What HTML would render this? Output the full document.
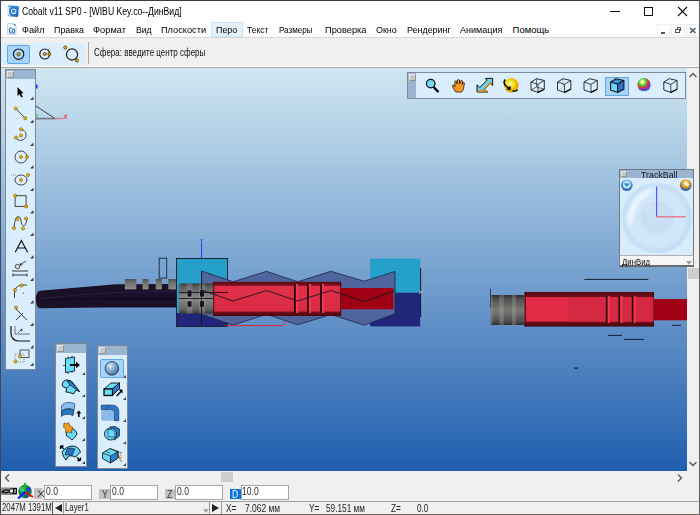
<!DOCTYPE html>
<html><head><meta charset="utf-8">
<style>
*{margin:0;padding:0;box-sizing:border-box}
html,body{width:700px;height:515px;overflow:hidden;background:#fff;font-family:"Liberation Sans",sans-serif;color:#000}
.a{position:absolute}
.t{position:absolute;white-space:nowrap;line-height:1}
#title{left:0;top:0;width:700px;height:22px;background:#fff}
#menu{left:0;top:22px;width:700px;height:15px;background:#fff}
.mi{position:absolute;top:26px;font-size:9px;white-space:nowrap;line-height:1;color:#000}
#tb{left:0;top:37px;width:700px;height:31px;background:#f0f0f0;border-top:1px solid #d8d8d8;border-bottom:1px solid #a8a8a8}
#vp{left:0;top:68px;width:687px;height:403px;background:linear-gradient(#d0e7f2,#205eae);overflow:hidden}
#vsb{left:687px;top:68px;width:13px;height:403px;background:#f0f0f0}
#hsb{left:0;top:471px;width:700px;height:14px;background:#f0f0f0}
#coord{left:0;top:485px;width:700px;height:16px;background:#f0f0f0}
#status{left:0;top:501px;width:700px;height:14px;background:#f0f0f0;border-top:1px solid #a0a0a0;border-bottom:1px solid #6b6458}
.inp{position:absolute;top:485px;height:15px;background:#fff;border:1px solid #a9a9a9;border-right-color:#d0d0d0;border-bottom-color:#e0e0e0;font-size:9px;line-height:12px;padding-left:1px;color:#222}
.lbl{position:absolute;top:489px;height:11px;background:#c0c0c0;font-size:11px;line-height:11px;text-align:center;color:#333}
.panel{position:absolute;background:#dbeefd;border:1px solid #7f8a96}
.phead{position:absolute;left:0;top:0;right:0;height:9px;background:#9ab4d2}
.pbtn{position:absolute;left:1px;top:1px;width:7px;height:7px;background:#c8c8c8;border:1px solid #e8e8e8;border-right-color:#909090;border-bottom-color:#909090}
.tri{position:absolute;width:0;height:0;border-left:4px solid transparent;border-bottom:4px solid #404040}
</style></head><body>
<!-- title bar -->
<div id="title" class="a"></div>
<svg class="a" style="left:0;top:0" width="22" height="22" viewBox="0 0 22 22">
<defs><linearGradient id="ticn" x1="0" y1="0" x2="1" y2="1"><stop offset="0" stop-color="#4aa8e8"/><stop offset="1" stop-color="#1560b8"/></linearGradient></defs>
<path d="M9 5.2 L18 6 Q19 6.2 18.8 7.5 L18.3 15.8 Q18.2 17 17 16.9 L9 16.2 Q7.8 16 7.8 14.8 L8 6.3 Q8.1 5.1 9 5.2 Z" fill="url(#ticn)"/>
<path d="M10.5 5.5 Q6 7.5 6.8 12 Q7.5 15.5 11 16.5 Q8.8 14 9 11 Q9.2 7.5 10.5 5.5 Z" fill="#e4e8ec"/>
<circle cx="13.3" cy="11.2" r="3.6" fill="#1a68c0"/>
<circle cx="13.6" cy="11.3" r="2.3" fill="none" stroke="#d8ecfa" stroke-width="1.1"/>
<circle cx="13.7" cy="11.4" r="0.9" fill="#5ab0f0"/>
</svg>
<div class="t" style="left:22.2px;top:7px;font-size:10px;color:#000;transform:scaleX(0.865);transform-origin:0 0;">Cobalt v11 SP0 - [WIBU Key.co--ДинВид]</div>
<!-- window buttons -->
<div class="a" style="left:610px;top:11px;width:10px;height:1px;background:#111"></div>
<div class="a" style="left:644px;top:7px;width:9px;height:9px;border:1px solid #111"></div>
<svg class="a" style="left:677px;top:6px" width="11" height="11" viewBox="0 0 11 11"><path d="M1 1L10 10M10 1L1 10" stroke="#111" stroke-width="1.1"/></svg>
<!-- menu -->
<div id="menu" class="a"></div>
<svg class="a" style="left:0;top:21px" width="20" height="16" viewBox="0 21 20 16">
<path d="M7.6 23.6 H13.5 L16 26 V34.5 H7.6 Z" fill="#f6fafd" stroke="#a8cce8" stroke-width="0.8"/>
<path d="M13.3 23.6 Q13.5 25.8 16 26.2 Q15.8 24 13.3 23.6 Z" fill="#2a6ab0"/>
<path d="M11.6 28 Q9.5 27.3 9.4 30.5 Q9.4 33.6 11.6 33" fill="none" stroke="#2a6ab0" stroke-width="1.2"/>
<ellipse cx="13.5" cy="31" rx="1.3" ry="2.2" fill="none" stroke="#2a6ab0" stroke-width="1.1"/>
</svg>
<div class="a" style="left:211px;top:22px;width:32px;height:15px;background:#e5f1fb;border:1px solid #cce4f7"></div>
<div class="t" style="left:21.9px;top:25px;font-size:9.5px;color:#000;transform:scaleX(0.964);transform-origin:0 0;">Файл</div>
<div class="t" style="left:54.0px;top:25px;font-size:9.5px;color:#000;transform:scaleX(0.935);transform-origin:0 0;">Правка</div>
<div class="t" style="left:93.4px;top:25px;font-size:9.5px;color:#000;transform:scaleX(0.978);transform-origin:0 0;">Формат</div>
<div class="t" style="left:135.8px;top:25px;font-size:9.5px;color:#000;transform:scaleX(0.912);transform-origin:0 0;">Вид</div>
<div class="t" style="left:160.9px;top:25px;font-size:9.5px;color:#000;transform:scaleX(0.969);transform-origin:0 0;">Плоскости</div>
<div class="t" style="left:215.7px;top:25px;font-size:9.5px;color:#000;transform:scaleX(0.936);transform-origin:0 0;">Перо</div>
<div class="t" style="left:247.1px;top:25px;font-size:9.5px;color:#000;transform:scaleX(0.891);transform-origin:0 0;">Текст</div>
<div class="t" style="left:278.8px;top:25px;font-size:9.5px;color:#000;transform:scaleX(0.845);transform-origin:0 0;">Размеры</div>
<div class="t" style="left:325.0px;top:25px;font-size:9.5px;color:#000;transform:scaleX(0.976);transform-origin:0 0;">Проверка</div>
<div class="t" style="left:375.9px;top:25px;font-size:9.5px;color:#000;transform:scaleX(0.941);transform-origin:0 0;">Окно</div>
<div class="t" style="left:407.3px;top:25px;font-size:9.5px;color:#000;transform:scaleX(0.938);transform-origin:0 0;">Рендеринг</div>
<div class="t" style="left:460.0px;top:25px;font-size:9.5px;color:#000;transform:scaleX(0.952);transform-origin:0 0;">Анимация</div>
<div class="t" style="left:512.6px;top:25px;font-size:9.5px;color:#000;transform:scaleX(1.0);transform-origin:0 0;">Помощь</div>
<!-- MDI buttons -->
<div class="a" style="left:657px;top:24px;width:13px;height:12px;background:#fff;border:1px solid #efefef"></div>
<div class="a" style="left:660.7px;top:32px;width:4.7px;height:1.6px;background:#4a5868"></div>
<div class="a" style="left:671px;top:24px;width:14px;height:12px;background:#fff;border:1px solid #efefef"></div>
<div class="a" style="left:676.5px;top:27.2px;width:4.5px;height:3.5px;border:1px solid #4a5868;border-top-width:1.5px"></div>
<div class="a" style="left:675px;top:29px;width:4.5px;height:3.8px;border:1px solid #4a5868;border-top-width:1.5px;background:#fff"></div>
<div class="a" style="left:686px;top:24px;width:13px;height:12px;background:#fff;border:1px solid #efefef"></div>
<svg class="a" style="left:688.5px;top:27px" width="7.5" height="7" viewBox="0 0 7.5 7"><path d="M1 1L6.5 6M6.5 1L1 6" stroke="#4a5868" stroke-width="1.5"/></svg>
<!-- toolbar -->
<div id="tb" class="a"></div>
<div class="a" style="left:1px;top:43px;width:84px;height:22px;background:#dbeefd"></div>
<div class="a" style="left:0;top:66px;width:700px;height:1px;background:#fbfbfb"></div>
<div class="a" style="left:7px;top:45px;width:23px;height:19px;background:#a6d4fa;border:1px solid #5fa8ec;border-radius:2px"></div>
<svg class="a" style="left:0;top:38px" width="90" height="30" viewBox="0 38 90 30">
<g fill="none" stroke="#1a1a1a" stroke-width="1.15">
<circle cx="18.6" cy="54.2" r="5.2"/>
<circle cx="44.8" cy="54" r="5"/>
<circle cx="72" cy="54.5" r="5.6"/>
</g>
<g fill="#f2b400" stroke="#3a2800" stroke-width="0.7">
<circle cx="18.6" cy="54.2" r="1.6"/>
<circle cx="44.8" cy="54" r="1.5"/>
<circle cx="49.3" cy="54" r="1.5"/>
<circle cx="65.3" cy="47.5" r="1.6"/>
<circle cx="76.9" cy="60.5" r="1.6"/>
</g>
</svg>
<div class="a" style="left:88px;top:42px;width:1px;height:22px;background:#a8a8a8"></div>
<div class="t" style="left:94.4px;top:47px;font-size:10.5px;color:#111;transform:scaleX(0.763);transform-origin:0 0;">Сфера: введите центр сферы</div>
<!-- viewport -->
<div id="vp" class="a"></div>
<!-- viewport content -->
<svg class="a" style="left:0;top:68px" width="687" height="403" viewBox="0 68 687 403">
<defs>
<linearGradient id="gcyl" x1="0" y1="0" x2="0" y2="1">
<stop offset="0" stop-color="#383838"/><stop offset="0.12" stop-color="#5e5e5c"/><stop offset="0.5" stop-color="#8a8987"/><stop offset="0.85" stop-color="#626260"/><stop offset="1" stop-color="#383838"/>
</linearGradient>
<linearGradient id="gcyl2" x1="0" y1="0" x2="0" y2="1">
<stop offset="0" stop-color="#2e2e2e"/><stop offset="0.15" stop-color="#505050"/><stop offset="0.5" stop-color="#7a7976"/><stop offset="0.85" stop-color="#525250"/><stop offset="1" stop-color="#2e2e2e"/>
</linearGradient>
<linearGradient id="gtooth" x1="0" y1="0" x2="0" y2="1">
<stop offset="0" stop-color="#3e3e3e"/><stop offset="0.12" stop-color="#5e5c5a"/><stop offset="0.3" stop-color="#6e6c6a"/><stop offset="1" stop-color="#8e8c88"/>
</linearGradient>
<linearGradient id="gred" x1="0" y1="0" x2="0" y2="1">
<stop offset="0" stop-color="#5a0a14"/><stop offset="0.1" stop-color="#7a1020"/><stop offset="0.14" stop-color="#e2304a"/><stop offset="0.85" stop-color="#d82a44"/><stop offset="0.9" stop-color="#6a0c18"/><stop offset="1" stop-color="#4a0810"/>
</linearGradient>
<linearGradient id="gred2" x1="0" y1="0" x2="0" y2="1">
<stop offset="0" stop-color="#5a0a14"/><stop offset="0.14" stop-color="#6e0e1c"/><stop offset="0.16" stop-color="#e42c46"/><stop offset="0.84" stop-color="#e02a44"/><stop offset="0.88" stop-color="#6a0c18"/><stop offset="1" stop-color="#400810"/>
</linearGradient>
</defs>
<!-- axis triangle -->
<rect x="36" y="84.5" width="1.5" height="4" fill="#2020ff"/>
<path d="M36 106 L55 118.5" stroke="#283038" stroke-width="0.9"/>
<rect x="36" y="117.8" width="19.5" height="1.6" fill="#6c7882"/>
<rect x="55.5" y="117.8" width="8" height="1.4" fill="#e07888"/>
<path d="M64 114.5 L67 118.8 M67 114.5 L64 118.8" stroke="#f02020" stroke-width="0.9"/>
<path d="M36.5 114.5 H38 L36.5 117 H38" stroke="#20d020" stroke-width="0.8" fill="none"/>
<!-- cable -->
<path d="M40 290.8 Q36 291.5 36 299 Q36 308 40 308.3 L100 307.6 L178 307.5 L178 284 L116 284.3 Z" fill="#1a1028"/>
<path d="M41 299 Q60 296 116 292.5 L178 291.5" stroke="#2a2040" stroke-width="1.2" fill="none"/>
<path d="M41 300 Q70 299 116 298.5 L178 298.5" stroke="#0c0814" stroke-width="0.8" fill="none"/>
<path d="M100 299 H178" stroke="#0e0a18" stroke-width="0.8"/>
<!-- teeth -->
<rect x="124.8" y="279.2" width="11.6" height="10.2" fill="url(#gtooth)"/>
<rect x="142.5" y="279.2" width="6.1" height="10.2" fill="url(#gtooth)"/>
<rect x="155.7" y="279.2" width="6.2" height="10.2" fill="url(#gtooth)"/>
<rect x="168.3" y="279.2" width="8.5" height="10.2" fill="url(#gtooth)"/>
<rect x="159.2" y="258.2" width="7.5" height="19.9" fill="none" stroke="#1c2430" stroke-width="0.9"/>
<!-- left cyan box -->
<rect x="176.8" y="258" width="50.8" height="54.9" fill="#24a0ca"/>
<rect x="176.8" y="312.9" width="50.8" height="13.5" fill="#20267a"/>
<rect x="176.5" y="258.5" width="51" height="68" fill="none" stroke="#141c28" stroke-width="0.9"/>
<path d="M201.6 244 V258" stroke="#1a3cff" stroke-width="1"/>
<path d="M200.5 239 l1 2 l1 -2 M201.5 241 v3" stroke="#1a3cff" stroke-width="0.7" fill="none"/>
<!-- right cyan box -->
<rect x="370.1" y="258.5" width="50.1" height="34.2" fill="#24a0ca"/>
<rect x="370.1" y="292.7" width="50.1" height="33.7" fill="#20267a"/>
<path d="M420.6 268 V317" stroke="#101820" stroke-width="1"/>
<path d="M418.8 289.8 l4.6 4.4 M423.4 289.8 l-4.6 4.4" stroke="#b8b0a0" stroke-width="0.9"/>
<!-- slate zigzag shape -->
<path d="M201.6 271 L233 281.8 L266.6 271.3 L297.6 281.8 L330.8 271.3 L364.3 281.2 L395 271.5 L395 313.8 L364.3 325.2 L330.8 314.5 L297.6 324.8 L266.6 314.3 L233 325 L201.6 314.4 Z" fill="#4f659e" stroke="#1e2440" stroke-width="0.8"/>
<!-- red rod -->
<rect x="341" y="288" width="52.4" height="21.3" fill="#a00014"/>
<!-- gray connector -->
<path d="M181 283.4 H213.5 V313.7 H181 Q179 313.7 179 311 V286 Q179 283.4 181 283.4 Z" fill="url(#gcyl)"/>
<rect x="186.5" y="283.6" width="6" height="30" fill="#b8b6b2" fill-opacity="0.28"/>
<rect x="199" y="283.6" width="6" height="30" fill="#b8b6b2" fill-opacity="0.28"/>
<rect x="187.6" y="290.4" width="3.9" height="6.2" fill="#1a1028"/>
<rect x="200" y="290.4" width="4" height="6.2" fill="#1a1028"/>
<rect x="187.6" y="301.2" width="3.9" height="5.5" fill="#1a1028"/>
<rect x="200" y="301.2" width="4" height="5.5" fill="#1a1028"/>
<path d="M179 298.5 H213" stroke="#141018" stroke-width="0.9"/>
<!-- red body left -->
<rect x="213.3" y="281.8" width="127.8" height="34.2" fill="url(#gred)"/>
<path d="M213.8 281.8 V316 M340.6 281.8 V316" stroke="#4a0a14" stroke-width="1"/>
<g>
<rect x="294.0" y="284" width="1.9" height="29" fill="#2a0610"/><rect x="295.9" y="284" width="2.2" height="29" fill="#f0384f"/>
<rect x="307.0" y="284" width="1.9" height="29" fill="#2a0610"/><rect x="308.9" y="284" width="2.2" height="29" fill="#f0384f"/>
<rect x="320.1" y="284" width="1.9" height="29" fill="#2a0610"/><rect x="322.0" y="284" width="2.2" height="29" fill="#f0384f"/>
</g>
<path d="M179 292.5 H228" stroke="#141018" stroke-width="0.9"/>
<path d="M201.5 271 V326" stroke="#141828" stroke-width="0.9"/>
<path d="M201.6 290 L233 301 L266.6 290.5 L297.6 301 L330.8 290.5 L364.3 301.5 L395 290.8" fill="none" stroke="#1a1420" stroke-width="0.9"/>
<path d="M226.5 325.6 H282.7" stroke="#e02030" stroke-width="1"/>
<path d="M283 322 l3 3.5 M286 322 l-3 3.5" stroke="#e02030" stroke-width="0.6"/>
<!-- right assembly -->
<path d="M490.5 288.6 V308" stroke="#2a3a60" stroke-width="1"/>
<rect x="490.7" y="295" width="34" height="30" rx="1.5" fill="url(#gcyl2)"/>
<rect x="491" y="296" width="1.6" height="28" fill="#a8a6a2" fill-opacity="0.35"/>
<rect x="499.2" y="295" width="4.6" height="30" fill="#b0aeab" fill-opacity="0.3"/>
<rect x="511.8" y="295" width="4.2" height="30" fill="#b0aeab" fill-opacity="0.3"/>
<rect x="524.6" y="292" width="129.3" height="34.6" fill="url(#gred2)"/>
<path d="M525.2 292 V326.6 M653.4 292 V326.6" stroke="#3a0810" stroke-width="1.1"/>
<rect x="568" y="297.5" width="86" height="24.5" fill="#cc2640" fill-opacity="0.55"/>
<g>
<rect x="605.8" y="296" width="1.9" height="27" fill="#2a0610"/><rect x="607.7" y="296" width="2.2" height="27" fill="#f0384f"/>
<rect x="618.4" y="296" width="1.9" height="27" fill="#2a0610"/><rect x="620.3000000000001" y="296" width="2.2" height="27" fill="#f0384f"/>
<rect x="631.8" y="296" width="1.9" height="27" fill="#2a0610"/><rect x="633.7" y="296" width="2.2" height="27" fill="#f0384f"/>
</g>
<rect x="654" y="299" width="33" height="21.3" fill="#a00014"/>
<path d="M584.4 279.4 H648.4" stroke="#1a2030" stroke-width="1"/>
<path d="M672 325.4 H681 M608 335.4 H622 M624 339.4 H644" stroke="#1a2030" stroke-width="1"/>
<rect x="574" y="367.3" width="4" height="1.8" fill="#2a3a58"/>
</svg>
<!-- left toolbar panel -->
<div class="panel" style="left:5px;top:69px;width:31px;height:301px"><div class="phead"></div><div class="pbtn"></div></div>
<svg class="a" style="left:0;top:68px" width="60" height="302" viewBox="0 68 60 302">
<g fill="#404040">
<path d="M30 100 h3.5 v-3.5 z"/><path d="M30 123 h3.5 v-3.5 z"/><path d="M30 146 h3.5 v-3.5 z"/><path d="M30 168.5 h3.5 v-3.5 z"/><path d="M30 191 h3.5 v-3.5 z"/><path d="M30 213.5 h3.5 v-3.5 z"/><path d="M30 236 h3.5 v-3.5 z"/><path d="M30 258.5 h3.5 v-3.5 z"/><path d="M30 281 h3.5 v-3.5 z"/><path d="M30 303.5 h3.5 v-3.5 z"/><path d="M30 326 h3.5 v-3.5 z"/><path d="M30 348.5 h3.5 v-3.5 z"/><path d="M30 366 h3.5 v-3.5 z"/>
</g>
<!-- arrow -->
<path d="M17.5 87 L17.5 96 L19.5 94.2 L21.3 97.5 L22.8 96.8 L21 93.5 L23.5 93.2 Z" fill="#000"/>
<!-- line -->
<path d="M15.8 108.6 L25.2 118.2" stroke="#333" stroke-width="0.9"/>
<circle cx="15.8" cy="108.6" r="1.6" fill="#f0b000" stroke="#6a4a00" stroke-width="0.5"/><circle cx="25.2" cy="118.2" r="1.6" fill="#f0b000" stroke="#6a4a00" stroke-width="0.5"/>
<!-- arc -->
<path d="M21.5 129.5 A5.5 5.5 0 1 1 16 138" fill="none" stroke="#333" stroke-width="0.9"/>
<circle cx="21" cy="129.3" r="1.6" fill="#f0b000" stroke="#6a4a00" stroke-width="0.5"/><circle cx="21" cy="135.5" r="1.6" fill="#f0b000" stroke="#6a4a00" stroke-width="0.5"/><circle cx="16" cy="137.5" r="1.6" fill="#f0b000" stroke="#6a4a00" stroke-width="0.5"/>
<!-- circle -->
<circle cx="21" cy="157" r="6" fill="none" stroke="#333" stroke-width="0.9"/>
<circle cx="21" cy="157" r="1.6" fill="#f0b000" stroke="#6a4a00" stroke-width="0.5"/><circle cx="27" cy="157" r="1.6" fill="#f0b000" stroke="#6a4a00" stroke-width="0.5"/>
<!-- ellipse tangent -->
<ellipse cx="21" cy="180" rx="6" ry="5" fill="none" stroke="#333" stroke-width="0.9"/>
<path d="M11 175 H17" stroke="#555" stroke-width="0.6" stroke-dasharray="1 1"/>
<circle cx="21" cy="180" r="1.6" fill="#f0b000" stroke="#6a4a00" stroke-width="0.5"/><circle cx="28" cy="175" r="1.6" fill="#f0b000" stroke="#6a4a00" stroke-width="0.5"/>
<!-- rect -->
<rect x="15.1" y="195.7" width="11" height="10.7" fill="none" stroke="#333" stroke-width="0.9"/>
<circle cx="15.1" cy="195.7" r="1.6" fill="#f0b000" stroke="#6a4a00" stroke-width="0.5"/><circle cx="26.2" cy="206.4" r="1.6" fill="#f0b000" stroke="#6a4a00" stroke-width="0.5"/>
<!-- spline -->
<path d="M14 228 C15 214 20 214 21 221 S26 228 27 218" fill="none" stroke="#333" stroke-width="0.9"/>
<circle cx="14" cy="228" r="1.6" fill="#f0b000" stroke="#6a4a00" stroke-width="0.5"/><circle cx="17.5" cy="219" r="1.6" fill="#f0b000" stroke="#6a4a00" stroke-width="0.5"/><circle cx="23" cy="228.5" r="1.6" fill="#f0b000" stroke="#6a4a00" stroke-width="0.5"/><circle cx="26" cy="218.5" r="1.6" fill="#f0b000" stroke="#6a4a00" stroke-width="0.5"/>
<!-- A -->
<path d="M15.2 252.3 L21.4 240.5 L27.6 252.3 M17.4 248 H25.4" fill="none" stroke="#111" stroke-width="1.2"/>
<!-- dimension -->
<path d="M12 271 H28 M13 273.5 V276.5 M27 273.5 V276.5 M13 275 H27" stroke="#222" stroke-width="0.9" fill="none"/>
<circle cx="17.5" cy="266.5" r="2.2" fill="none" stroke="#222" stroke-width="0.8"/>
<path d="M20 265 L26 261 M20 265 l2.5 -0.2 M20 265 l0.8 -2.2" stroke="#222" stroke-width="0.8" fill="none"/>
<!-- fillet -->
<path d="M14.5 298 V292 Q15 286 22 285 H27" fill="none" stroke="#333" stroke-width="0.9"/>
<circle cx="15" cy="290" r="1.6" fill="#f0b000" stroke="#6a4a00" stroke-width="0.5"/><circle cx="21.5" cy="285.5" r="1.6" fill="#f0b000" stroke="#6a4a00" stroke-width="0.5"/>
<circle cx="23.5" cy="293" r="0.6" fill="#222"/>
<!-- trim -->
<path d="M16 309 L27 320 M16 320 L23 313" stroke="#222" stroke-width="0.9"/>
<circle cx="16" cy="307.5" r="1.6" fill="#f0b000" stroke="#6a4a00" stroke-width="0.5"/>
<!-- axis/hatch -->
<path d="M11 326 V333 Q11 340 18 341 H30" fill="none" stroke="#111" stroke-width="1.2"/>
<path d="M15 326 V334 H30 M18 333 l3 -3" stroke="#555" stroke-width="0.8" fill="none"/>
<path d="M19.5 331 l2.5 -2.5 l0.5 2 z" fill="#111"/>
<!-- transform -->
<rect x="20" y="350" width="9" height="7.5" fill="none" stroke="#333" stroke-width="0.8"/>
<rect x="15" y="354" width="9" height="8" fill="none" stroke="#555" stroke-width="0.6" stroke-dasharray="1 1"/>
<circle cx="20" cy="356.5" r="1.6" fill="#f0b000" stroke="#6a4a00" stroke-width="0.5"/><circle cx="15.5" cy="361.5" r="1.6" fill="#f0b000" stroke="#6a4a00" stroke-width="0.5"/>
</svg>
<!-- bottom panel A -->
<div class="panel" style="left:55px;top:343px;width:32px;height:124px"><div class="phead"></div><div class="pbtn"></div></div>
<!-- bottom panel B -->
<div class="panel" style="left:97px;top:345px;width:31px;height:124px"><div class="phead"></div><div class="pbtn"></div></div>
<div class="a" style="left:100.4px;top:359px;width:24px;height:19px;background:#a6d4fa;border:1px solid #5fa8ec;border-radius:2px"></div>
<svg class="a" style="left:50px;top:340px" width="85" height="130" viewBox="50 340 85 130">
<g fill="#404040">
<path d="M82 375 h3 v-3 z"/><path d="M82 397 h3 v-3 z"/><path d="M82 419 h3 v-3 z"/><path d="M82 441 h3 v-3 z"/><path d="M82 464 h3 v-3 z"/>
<path d="M123 378 h3 v-3 z"/><path d="M123 400 h3 v-3 z"/><path d="M123 422 h3 v-3 z"/><path d="M123 444 h3 v-3 z"/><path d="M123 466 h3 v-3 z"/>
</g>
<!-- panel A icons -->
<defs>
<radialGradient id="sphB" cx="0.38" cy="0.32" r="0.7"><stop offset="0" stop-color="#e8f2fc"/><stop offset="0.35" stop-color="#9abadc"/><stop offset="1" stop-color="#4a70a0"/></radialGradient>
</defs>
<path d="M65.5 358.5 L74.5 357 L74.5 371 L65.5 372.5 Z" fill="#66dcf6" stroke="#14202c" stroke-width="0.9"/>
<path d="M63 365.5 H66 M68 358.5 V356.5 M72 357 V355.5 M68 372 V374 M72 371.5 V373" stroke="#14202c" stroke-width="0.8"/>
<path d="M70 365 H76.5" stroke="#000" stroke-width="2"/>
<path d="M76 361.8 L80 365 L76 368.2 Z" fill="#000"/>
<path d="M62 385 Q63 380 67 380 Q72 380 73 383 L79.5 391.5 L76 390 L73.5 394 Q69 392 66 392 L66.5 388 Q63 388 62 385 Z" fill="#6adaf6" stroke="#101c28" stroke-width="1"/>
<path d="M67 381 Q71 381 73 384 L79.5 391.5 L74 388 L70 385 Z" fill="#2a80cc" stroke="#101c28" stroke-width="0.7"/>
<path d="M66.5 388 L70 385" stroke="#101c28" stroke-width="0.8"/>
<path d="M61.5 406 Q64 402 70 402.5 Q73 402.5 75 404 L74 410 Q70 407.5 65 409 Q62.5 409.5 61.5 412 Z" fill="#8abcec" stroke="#203a60" stroke-width="0.7"/>
<path d="M61.5 412 Q64 408.5 70 409 L74 410.5 L73 415.5 Q69 413.5 65 414.5 Q62.5 415 61.5 416.5 Z" fill="#2a78c8" stroke="#14284a" stroke-width="0.7"/>
<path d="M78.8 417 V412.5" stroke="#000" stroke-width="1.6"/>
<path d="M76.3 413.5 L78.8 410.5 L81.3 413.5 Z" fill="#000"/>
<path d="M66 431 Q69 428 73 429 Q76 430 77 434 Q75 438 72 440 Q69 437 66.5 436 Z" fill="#6adaf6" stroke="#101c28" stroke-width="0.9"/>
<path d="M64 423 L67 424 L68.5 422.5 L70 426 L73 427.5 L71.5 430 L72 433 L68.5 432 L66 433 L65.5 429 L63.5 427 Z" fill="#f09a20" stroke="#5a3000" stroke-width="0.6"/>
<path d="M62 452 Q66 446 72 446 Q78 446 80.5 452 L75.5 457 Q72 455 68.5 456 L66 460 Q63 457 62 452 Z" fill="#6adaf6" stroke="#101c28" stroke-width="1"/>
<path d="M67 448.5 Q71 447.5 75 449 L72 455.5 Q69 454.5 65 455 Z" fill="#2a70c0" stroke="#101c28" stroke-width="0.6"/>
<path d="M60.5 446 L64 449 M60.5 446 H63.5 M60.5 446 V449 M80.5 460.5 L77 457.5 M80.5 460.5 H77.5 M80.5 460.5 V457.5" stroke="#000" stroke-width="1.3" fill="none"/>
<!-- panel B icons -->
<circle cx="111.9" cy="368.4" r="6.8" fill="url(#sphB)" stroke="#223040" stroke-width="0.8"/>
<path d="M104 389 L111 383 L119.5 383 L112.5 389 Z" fill="#6adaf6" stroke="#0c0c0c" stroke-width="0.9"/>
<path d="M112.5 389 L119.5 383 L119.5 388.5 L112.5 395.5 Z" fill="#2a80d0" stroke="#0c0c0c" stroke-width="0.9"/>
<rect x="104" y="389" width="8.5" height="6.5" fill="#6adaf6" stroke="#0c0c0c" stroke-width="1.3"/>
<path d="M116.5 396 L121.5 391" stroke="#000" stroke-width="1.4"/>
<path d="M122.5 389.5 L122.5 393.5 L118.5 389.5 Z" fill="#000"/>
<path d="M101.2 405 H112 Q118.8 405 118.8 412 V420.8 H103 Q101.2 420.8 101.2 419 Z" fill="#8ab8e8"/>
<path d="M101.2 405 H112 Q118.8 405 118.8 412 V420.8 H114.5 V412.5 Q114.5 409.5 111 409.5 H101.2 Z" fill="#2e78c8" stroke="#14284a" stroke-width="0.5"/>
<path d="M106 409.5 L109 405" stroke="#14284a" stroke-width="0.6"/>
<path d="M110 427 L115 426.5 L119.4 429 L119.4 436 L114.5 440 Z" fill="#2a78c8" stroke="#101c28" stroke-width="0.8"/>
<circle cx="110.5" cy="434" r="6" fill="#6adaf6" stroke="#101c28" stroke-width="0.9"/>
<path d="M108 429.5 H112 L115 432.5 V437 H108 Z" fill="none" stroke="#1a4a8a" stroke-width="0.8"/>
<path d="M102.5 453 L110 448.5 L118 451.5 L118 458 L110.5 463 L102.5 458.5 Z" fill="#6adaf6" stroke="#101c28" stroke-width="0.9"/>
<path d="M110.5 456 L118 451.5 L118 458 L110.5 463 Z" fill="#2a80d0" stroke="#101c28" stroke-width="0.7"/>
<path d="M102.5 453 L110.5 456 V463" fill="none" stroke="#101c28" stroke-width="0.7"/>
<path d="M106 451 L110 453.5 M110 448.5 L122 453 M116 451 L121.5 462" stroke="#222" stroke-width="0.6"/>
<path d="M121 454 L119.5 457 L121.5 457.5 L120 460.5" fill="none" stroke="#f0a000" stroke-width="1"/>
</svg>
<!-- top view toolbar -->
<div class="a" style="left:407px;top:72px;width:279px;height:27px;background:#dbeefd;border:1px solid #7f8a96"></div>
<div class="a" style="left:408px;top:73px;width:8px;height:25px;background:#9ab4d2"></div>
<div class="pbtn" style="left:409px;top:74px"></div>
<div class="a" style="left:605px;top:77px;width:24px;height:19px;background:#a9d3f5;border:1px solid #5ea8e6"></div>
<svg class="a" style="left:405px;top:70px" width="282" height="30" viewBox="405 70 282 30">
<defs>
<radialGradient id="osph" cx="0.42" cy="0.4" r="0.62"><stop offset="0" stop-color="#fffff0"/><stop offset="0.2" stop-color="#f8f070"/><stop offset="0.5" stop-color="#f2d800"/><stop offset="1" stop-color="#e88a00"/></radialGradient>
<radialGradient id="rb" cx="0.38" cy="0.3" r="0.75"><stop offset="0" stop-color="#ffffff"/><stop offset="0.15" stop-color="#f8f080"/><stop offset="0.35" stop-color="#40d040"/><stop offset="0.6" stop-color="#e03030"/><stop offset="0.8" stop-color="#8030d0"/><stop offset="1" stop-color="#2040e0"/></radialGradient>
</defs>
<!-- magnifier -->
<path d="M434 87.5 L437.8 91.3" stroke="#000" stroke-width="2.4" stroke-linecap="round"/>
<circle cx="430.7" cy="83.6" r="4.3" fill="#74d6f4" stroke="#101010" stroke-width="1.2"/>
<!-- hand -->
<path d="M456 92 Q454 90 453.5 88 L452.3 85.8 Q452.5 84.6 454 85.3 L455 86.5 L454.8 81.5 Q455.3 80.3 456.5 81 L457 84 L457.5 80 Q458.5 79 459.5 80 L459.8 84 L460.6 80.8 Q461.8 80 462.6 81 L462.3 84.5 L463.3 82.6 Q464.5 82.3 464.4 83.6 L463.5 88.5 Q462.8 91.5 461.5 92 Z" fill="#f59a28" stroke="#2a1400" stroke-width="0.8" stroke-linejoin="round"/>
<!-- zoom extents -->
<path d="M477 84.8 L479.8 87.4 L487 80.4 L485.6 78.4 L492.6 78.4 L492.6 85.4 L490.6 83.4 L483.4 90.4 L487.6 92 L477 92 Z" fill="#6ad4f2" stroke="#111" stroke-width="1" stroke-linejoin="round"/>
<path d="M477.5 90.8 H487.2" stroke="#f0901a" stroke-width="1.8"/>
<path d="M484.6 88.4 L491.4 81.8" stroke="#f0901a" stroke-width="1.6"/>
<!-- orbit sphere -->
<circle cx="511.3" cy="85.3" r="7.2" fill="url(#osph)"/>
<path d="M505.2 79.5 Q502.8 82.5 505.5 85.5 L509.5 88.8" fill="none" stroke="#000" stroke-width="1.5"/>
<path d="M510.8 90 L506.5 89.6 L510.4 85.6 Z" fill="#000"/>
<path d="M512.5 90.6 Q515.5 92 517.8 89.8" fill="none" stroke="#111" stroke-width="1.2"/>
<path d="M531 82 L536.5 78.7 L544.3 80.5 L544.3 89.2 L538 92.4 L531 90 Z" fill="none" stroke="#1a1a1a" stroke-width="0.9" stroke-linejoin="round"/><path d="M531 82 L538 84.3 L544.3 80.5 M538 84.3 L538 92.4" fill="none" stroke="#1a1a1a" stroke-width="0.8"/><path d="M544.3 89.2 L538 92.4" stroke="#000" stroke-width="1.2"/><path d="M536.5 78.7 L536.5 87 L531 90 M536.5 87 L544.3 89.2" fill="none" stroke="#333" stroke-width="0.7"/><path d="M557.5 82 L563.0 78.7 L570.8 80.5 L570.8 89.2 L564.5 92.4 L557.5 90 Z" fill="none" stroke="#1a1a1a" stroke-width="0.9" stroke-linejoin="round"/><path d="M557.5 82 L564.5 84.3 L570.8 80.5 M564.5 84.3 L564.5 92.4" fill="none" stroke="#1a1a1a" stroke-width="0.8"/><path d="M570.8 89.2 L564.5 92.4" stroke="#000" stroke-width="1.2"/><path d="M563.0 78.7 L563.0 86 M560.5 89 L564.5 85" fill="none" stroke="#555" stroke-width="0.6" stroke-dasharray="1 1"/><path d="M584 82 L589.5 78.7 L597.3 80.5 L597.3 89.2 L591 92.4 L584 90 Z" fill="none" stroke="#1a1a1a" stroke-width="0.9" stroke-linejoin="round"/><path d="M584 82 L591 84.3 L597.3 80.5 M591 84.3 L591 92.4" fill="none" stroke="#1a1a1a" stroke-width="0.8"/><path d="M597.3 89.2 L591 92.4" stroke="#000" stroke-width="1.2"/><path d="M610.6 82 L617.6 84.3 L617.6 92.4 L610.6 90 Z" fill="#6ed8f6"/><path d="M610.6 82 L616.1 78.7 L623.9 80.5 L617.6 84.3 Z" fill="#3c8ed6"/><path d="M617.6 84.3 L623.9 80.5 L623.9 89.2 L617.6 92.4 Z" fill="#2f72c4"/><path d="M610.6 82 L616.1 78.7 L623.9 80.5 L623.9 89.2 L617.6 92.4 L610.6 90 Z M610.6 82 L617.6 84.3 L623.9 80.5 M617.6 84.3 L617.6 92.4" fill="none" stroke="#101820" stroke-width="1.1" stroke-linejoin="round"/>
<circle cx="644" cy="84.6" r="6.6" fill="url(#rb)"/>
<path d="M638.5 88.5 Q644 92.5 649.5 88.5" stroke="#3a6ad8" stroke-width="1.1" fill="none" stroke-opacity="0.8"/>
<path d="M663.8 82 L669.3 78.7 L677.0999999999999 80.5 L677.0999999999999 89.2 L670.8 92.4 L663.8 90 Z" fill="none" stroke="#1a1a1a" stroke-width="0.9" stroke-linejoin="round"/><path d="M663.8 82 L670.8 84.3 L677.0999999999999 80.5 M670.8 84.3 L670.8 92.4" fill="none" stroke="#1a1a1a" stroke-width="0.8"/><path d="M677.0999999999999 89.2 L670.8 92.4" stroke="#000" stroke-width="1.2"/>
</svg>
<!-- scrollbars -->
<div id="vsb" class="a"></div>
<svg class="a" style="left:688px;top:71px" width="10" height="8" viewBox="0 0 10 8"><path d="M1.5 6L5 2.5L8.5 6" fill="none" stroke="#555" stroke-width="1.3"/></svg>
<div class="a" style="left:688px;top:268px;width:11px;height:11px;background:#cdcdcd"></div>
<svg class="a" style="left:688px;top:460px" width="10" height="8" viewBox="0 0 10 8"><path d="M1.5 2L5 5.5L8.5 2" fill="none" stroke="#555" stroke-width="1.3"/></svg>
<!-- trackball -->
<div class="a" style="left:619px;top:169px;width:75px;height:98px;background:#d8ecfb;border:1px solid #6f7780"></div>
<div class="a" style="left:620px;top:170px;width:73px;height:8px;background:#9ab4d2"></div>
<div class="pbtn" style="left:621px;top:171px;width:6px;height:6px"></div>
<div class="t" style="left:640.5px;top:169.5px;font-size:9.5px;color:#141424;transform:scaleX(0.93);transform-origin:0 0">TrackBall</div>
<svg class="a" style="left:619px;top:178px" width="75" height="78" viewBox="619 178 75 78">
<defs>
<radialGradient id="tb1" cx="0.5" cy="0.5" r="0.5"><stop offset="0" stop-color="#d2e7f9"/><stop offset="0.78" stop-color="#d0e6f9"/><stop offset="0.93" stop-color="#c2ddf5"/><stop offset="1" stop-color="#d2e9fb"/></radialGradient>
<filter id="blr" x="-50%" y="-50%" width="200%" height="200%"><feGaussianBlur stdDeviation="2.2"/></filter>
<radialGradient id="tb2" cx="0.5" cy="0.45" r="0.5"><stop offset="0" stop-color="#cfe2f4"/><stop offset="0.8" stop-color="#c6dcf1"/><stop offset="1" stop-color="#cfe5f8"/></radialGradient>
<radialGradient id="bb" cx="0.5" cy="0.35" r="0.6"><stop offset="0" stop-color="#d8f0ff"/><stop offset="0.5" stop-color="#6ab6ec"/><stop offset="1" stop-color="#1a5aa8"/></radialGradient>
<radialGradient id="ob" cx="0.5" cy="0.35" r="0.6"><stop offset="0" stop-color="#ffd890"/><stop offset="0.5" stop-color="#f4a020"/><stop offset="1" stop-color="#1a5aa8"/></radialGradient>
</defs>
<circle cx="657" cy="218.2" r="35.8" fill="url(#tb1)"/>
<path d="M630 222 Q631 200 651 190" fill="none" stroke="#f4fbff" stroke-width="5" stroke-linecap="round" opacity="0.9" filter="url(#blr)"/>
<circle cx="656.9" cy="218.6" r="18" fill="url(#tb2)"/>
<path d="M645 214 Q647 206 655 203" fill="none" stroke="#e0eef9" stroke-width="2.5" opacity="0.8" filter="url(#blr)"/>
<circle cx="626.8" cy="185.2" r="5.8" fill="url(#bb)"/>
<circle cx="626.8" cy="184.8" r="3.8" fill="#b8e0fa"/>
<path d="M624 183.5 h5.6 l-2.8 3 z" fill="#2a78c8"/>
<circle cx="685.7" cy="185.2" r="5.8" fill="url(#ob)"/>
<path d="M683.5 183 l2.5 -2 l3.2 3.4 l-2.2 2.2 z" fill="#fff4d0"/>
<path d="M656.6 186.5 V216.8" stroke="#5050f0" stroke-width="1.1"/>
<path d="M656.6 216.8 H685.8" stroke="#ec7080" stroke-width="1.3"/>
</svg>
<div class="a" style="left:619px;top:255px;width:75px;height:12px;background:#f6f6f6;border:1px solid #808080;border-top-color:#b0b0b0;border-bottom:2px solid #6a6a6a"></div>
<div class="t" style="left:621.5px;top:256.5px;font-size:9.5px;color:#111;transform:scaleX(0.82);transform-origin:0 0">ДинВид</div>
<svg class="a" style="left:686px;top:261px" width="6" height="4" viewBox="0 0 6 4"><path d="M0 0H6L3 4Z" fill="#a0a0a0"/></svg>
<div id="hsb" class="a"></div>
<svg class="a" style="left:3px;top:473px" width="8" height="10" viewBox="0 0 8 10"><path d="M6 1.5L2.5 5L6 8.5" fill="none" stroke="#555" stroke-width="1.3"/></svg>
<div class="a" style="left:221px;top:472px;width:12px;height:10px;background:#cdcdcd"></div>
<svg class="a" style="left:676px;top:473px" width="8" height="10" viewBox="0 0 8 10"><path d="M2 1.5L5.5 5L2 8.5" fill="none" stroke="#555" stroke-width="1.3"/></svg>
<!-- coordinate bar -->
<div id="coord" class="a"></div>
<svg class="a" style="left:0;top:480px" width="45" height="21" viewBox="0 480 45 21">
<rect x="1" y="487.5" width="16" height="7.5" rx="1" fill="#8a8a8a"/>
<path d="M2 492.5 Q5 488.5 9 490.5 M2 491 Q5 494 9 492" stroke="#111" stroke-width="1.3" fill="none"/>
<circle cx="11.5" cy="491" r="2.3" fill="#e0e0e0" stroke="#111" stroke-width="1"/>
<rect x="13.5" y="488.5" width="3" height="5" fill="none" stroke="#111" stroke-width="1"/>
<circle cx="25" cy="491.5" r="6.8" fill="#1e8a4a"/>
<circle cx="22" cy="489" r="2.5" fill="#40c060"/>
<circle cx="28.5" cy="489.5" r="2.5" fill="#2040c0"/>
<circle cx="26" cy="496" r="2.2" fill="#206080"/>
<path d="M21 490 l3 1" stroke="#40e0f0" stroke-width="1"/>
<path d="M25 483 V492" stroke="#10c010" stroke-width="2.2"/>
<path d="M25 492 L33 497" stroke="#e01010" stroke-width="2"/>
<path d="M25 492 L18 498.5" stroke="#1020ff" stroke-width="2.2"/>
</svg>
<div class="a" style="left:33.7px;top:488.4px;width:8.7px;height:10.9px;background:#c2c2c2"></div>
<svg class="a" style="left:36.5px;top:489.5px" width="8" height="8" viewBox="0 0 8 8"><path d="M1 0.5 L7 7 M7 0.5 L1 7" stroke="#3c3c3c" stroke-width="1.1"/></svg>
<div class="a" style="left:44px;top:485px;width:48px;height:14.5px;background:#fff;border:1px solid #a6a6a6"></div>
<div class="a" style="left:99.3px;top:488.5px;width:10.7px;height:10.9px;background:#c2c2c2"></div>
<div class="t" style="left:101.5px;top:489px;font-size:10.5px;color:#3c3c3c;transform:scaleX(0.85);transform-origin:0 0">Y</div>
<div class="a" style="left:110px;top:485px;width:48px;height:14.5px;background:#fff;border:1px solid #a6a6a6"></div>
<div class="a" style="left:164.7px;top:488.5px;width:10.7px;height:10.9px;background:#c2c2c2"></div>
<div class="t" style="left:166.5px;top:489px;font-size:10.5px;color:#3c3c3c;transform:scaleX(0.85);transform-origin:0 0">Z</div>
<div class="a" style="left:175.4px;top:485px;width:48px;height:14.5px;background:#fff;border:1px solid #a6a6a6"></div>
<div class="a" style="left:230.3px;top:488.5px;width:10.3px;height:10.9px;background:#0a74da"></div>
<div class="t" style="left:231.5px;top:489.5px;font-size:10px;color:#fff;transform:scaleX(0.85);transform-origin:0 0">D</div>
<div class="a" style="left:240.6px;top:485px;width:48.5px;height:14.5px;background:#fff;border:1px solid #a6a6a6"></div>
<div class="t" style="left:45.8px;top:487.2px;font-size:10.2px;color:#2a2a2a;transform:scaleX(0.84);transform-origin:0 0">0.0</div>
<div class="t" style="left:111.6px;top:487.2px;font-size:10.2px;color:#2a2a2a;transform:scaleX(0.84);transform-origin:0 0">0.0</div>
<div class="t" style="left:177px;top:487.2px;font-size:10.2px;color:#2a2a2a;transform:scaleX(0.84);transform-origin:0 0">0.0</div>
<div class="t" style="left:242.2px;top:487.2px;font-size:10.2px;color:#2a2a2a;transform:scaleX(0.84);transform-origin:0 0">10.0</div>
<!-- status bar -->
<div id="status" class="a"></div>
<div class="t" style="left:1.5px;top:502.3px;font-size:11px;color:#222;transform:scaleX(0.707);transform-origin:0 0;">2047M 1391M</div>
<div class="a" style="left:52px;top:502px;width:1px;height:12px;background:#555"></div>
<div class="a" style="left:63px;top:502px;width:1px;height:12px;background:#999"></div>
<svg class="a" style="left:54px;top:503px" width="9" height="10" viewBox="0 0 9 10"><path d="M8 1 V9 L1 5 Z" fill="#222"/></svg>
<div class="t" style="left:65.0px;top:503.3px;font-size:10px;color:#222;transform:scaleX(0.776);transform-origin:0 0;">Layer1</div>
<svg class="a" style="left:203px;top:509px" width="6" height="4" viewBox="0 0 6 4"><path d="M0 0H6L3 4Z" fill="#aaa"/></svg>
<div class="a" style="left:209px;top:502px;width:1px;height:12px;background:#999"></div>
<svg class="a" style="left:211px;top:503px" width="9" height="10" viewBox="0 0 9 10"><path d="M1 1 V9 L8 5 Z" fill="#222"/></svg>
<div class="a" style="left:221px;top:502px;width:1px;height:12px;background:#999"></div>
<div class="t" style="left:225.7px;top:503.5px;font-size:10px;color:#222;transform:scaleX(0.83);transform-origin:0 0;">X=</div>
<div class="t" style="left:244.8px;top:503.5px;font-size:10px;color:#222;transform:scaleX(0.845);transform-origin:0 0;">7.062 мм</div>
<div class="t" style="left:308.6px;top:503.5px;font-size:10px;color:#222;transform:scaleX(0.83);transform-origin:0 0;">Y=</div>
<div class="t" style="left:326.2px;top:503.5px;font-size:10px;color:#222;transform:scaleX(0.826);transform-origin:0 0;">59.151 мм</div>
<div class="t" style="left:391.4px;top:503.5px;font-size:10px;color:#222;transform:scaleX(0.83);transform-origin:0 0;">Z=</div>
<div class="t" style="left:416.6px;top:503.5px;font-size:10px;color:#222;transform:scaleX(0.814);transform-origin:0 0;">0.0</div>
<div class="a" style="left:0;top:0;width:700px;height:1px;background:#3c3c3c"></div>
<div class="a" style="left:0;top:0;width:1px;height:515px;background:#404858"></div>
<div class="a" style="left:699px;top:0;width:1px;height:515px;background:#5c5e66"></div>
</body></html>
